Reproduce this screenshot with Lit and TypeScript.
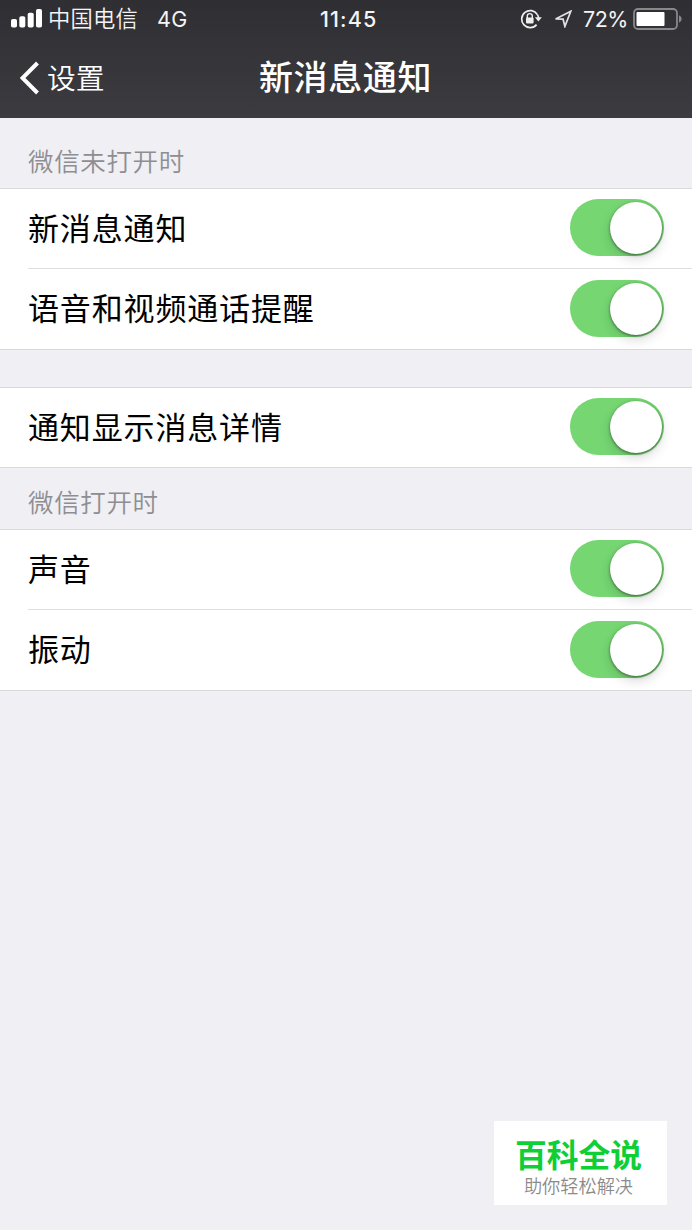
import { LitElement, html, css, nothing } from "lit";
import { customElement, property } from "lit/decorators.js";

@customElement("toggle-switch")
class ToggleSwitch extends LitElement {
  static styles = css`
    :host {
      display: flex;
      flex: none;
      padding-bottom: 1.4px;
    }
    .track {
      box-sizing: border-box;
      display: flex;
      justify-content: flex-end;
      width: 94px;
      height: 57px;
      padding: 3px 2.5px 2px;
      border-radius: 29px;
      background: #75d672;
    }
    .knob {
      width: 52px;
      height: 52px;
      border-radius: 50%;
      background: #fff;
      box-shadow: 0 1px 3px rgba(0, 0, 0, 0.48), 0 5px 12px rgba(0, 0, 0, 0.14);
    }
  `;
  render() {
    return html`<div class="track"><div class="knob"></div></div>`;
  }
}

@customElement("status-bar")
class StatusBar extends LitElement {
  static styles = css`
    :host {
      display: grid;
      grid-template-columns: 320px 1fr auto;
      align-items: center;
      height: 38px;
      padding: 0 9px 0 11px;
      font-size: 22px;
      line-height: 38px;
      color: #f4f4f5;
    }
    .left,
    .right {
      display: flex;
      align-items: center;
    }
    svg {
      display: block;
      flex: none;
    }
    .carrier {
      margin-left: 6px;
      font-size: 22.3px;
      line-height: 34px;
      padding-bottom: 4px;
      letter-spacing: 0.2px;
      font-weight: 350;
    }
    .network {
      margin-left: 19px;
      letter-spacing: 0.3px;
    }
    .latin {
      font-family: Inter, "Liberation Sans", sans-serif;
      font-size: 21.5px;
    }
    .time {
      margin-left: -11px;
      font-weight: 500;
      letter-spacing: 1.1px;
    }
    .lock {
      margin-right: 12px;
    }
    .arrow {
      margin-right: 11px;
    }
    .percent {
      letter-spacing: -0.5px;
    }
    .battery {
      margin-left: 5px;
    }
  `;
  render() {
    return html`
      <div class="left">
        <svg width="31" height="20" viewBox="0 0 31 20" fill="#fff">
          <rect x="0" y="10" width="6" height="8.5" rx="1.8" />
          <rect x="8.3" y="7.2" width="6" height="11.3" rx="1.8" />
          <rect x="16.7" y="3.8" width="6" height="14.7" rx="1.8" />
          <rect x="25" y="0" width="6" height="18.5" rx="1.8" />
        </svg>
        <span class="carrier">中国电信</span>
        <span class="latin network">4G</span>
      </div>
      <span class="latin time">11:45</span>
      <div class="right">
        <svg class="lock" width="22" height="20" viewBox="0 0 22 20" fill="none">
          <path d="M17.4 5.6A8.5 8.5 0 1 0 16.6 15.6" stroke="#eee" stroke-width="1.7" />
          <path d="M17.4 5.6Q18.5 7.3 18.6 9" stroke="#eee" stroke-width="1.7" />
          <path d="M14.9 8.2h7l-3.5 4.2z" fill="#eee" />
          <path d="M7.3 9V7.1a2.5 2.5 0 0 1 5 0V9" stroke="#eee" stroke-width="1.4" />
          <rect x="6" y="8.6" width="7.6" height="5.8" rx="0.8" fill="#eee" />
        </svg>
        <svg class="arrow" width="18" height="18" viewBox="0 0 18 18" fill="none">
          <path
            d="M16.8 1.2 1.6 9l7.5.2 1.8 7.2z"
            stroke="#e2e2e2"
            stroke-width="1.7"
            stroke-linejoin="miter"
          />
        </svg>
        <span class="latin percent">72%</span>
        <svg class="battery" width="50" height="22" viewBox="0 0 50 22" fill="none">
          <rect x="1" y="1" width="43" height="20" rx="4" stroke="#88888b" stroke-width="1.8" />
          <rect x="3.5" y="4" width="28" height="14" rx="1" fill="#fff" />
          <path d="M46 7.3q2.7 1.3 2.7 3.7t-2.7 3.7z" fill="#88888b" />
        </svg>
      </div>
    `;
  }
}

@customElement("setting-row")
class SettingRow extends LitElement {
  @property() label = "";
  static styles = css`
    :host {
      display: flex;
      align-items: center;
      justify-content: space-between;
      margin-left: 28px;
      padding-right: 28px;
      height: 80px;
      font-size: 31px;
      letter-spacing: 0.85px;
      color: #000;
    }
    :host(.divided) {
      border-top: 1px solid #dedee0;
    }
    .label {
      line-height: 46px;
      padding-bottom: 4px;
    }
  `;
  render() {
    return html`<span class="label">${this.label}</span><toggle-switch></toggle-switch>`;
  }
}

@customElement("app-root")
class AppRoot extends LitElement {
  static styles = css`
    :host {
      position: relative;
      display: block;
      height: 1230px;
      overflow: hidden;
      background: #efeff4;
      font-family: "Noto Sans CJK SC", sans-serif;
    }
    .top {
      height: 118px;
      background: linear-gradient(#2f2e33, #3c3b40);
    }
    .nav {
      display: grid;
      grid-template-columns: 1fr auto 1fr;
      align-items: center;
      height: 80px;
      color: #fff;
    }
    .back {
      display: flex;
      align-items: center;
      gap: 7px;
      padding-left: 20px;
      font-size: 28.8px;
      font-weight: 350;
    }
    .back span {
      line-height: 42px;
      padding-bottom: 3px;
    }
    .back svg {
      display: block;
    }
    .title {
      font-size: 34px;
      font-weight: 500;
      letter-spacing: 0.6px;
      line-height: 50px;
      padding: 0 1px 4px 0;
    }
    .caption {
      box-sizing: border-box;
      height: 70px;
      padding: 24px 28px 0;
      font-size: 25.5px;
      font-weight: 350;
      line-height: 36px;
      letter-spacing: 0.65px;
      color: #8e8e92;
    }
    .caption.tight {
      height: 61px;
      padding-top: 15px;
    }
    .group {
      border-top: 1px solid #d9d9dc;
      border-bottom: 1px solid #d9d9dc;
      background: #fff;
    }
    .single {
      margin-top: 37px;
    }
    .single setting-row,
    .group setting-row:first-child {
      height: 79px;
    }
    .brand {
      position: absolute;
      left: 494px;
      top: 1121px;
      width: 173px;
      height: 84px;
      box-sizing: border-box;
      padding: 11px 4px 0 0;
      background: #fff;
      text-align: center;
    }
    .name {
      font-size: 31.8px;
      font-weight: 700;
      line-height: 42px;
      color: #10ce36;
    }
    .slogan {
      font-size: 18.2px;
      font-weight: 350;
      line-height: 22px;
      color: #8b8b8b;
    }
  `;

  group(rows: string[], extra = "") {
    return html`<div class="group ${extra}">
      ${rows.map(
        (r, i) => html`<setting-row class=${i ? "divided" : nothing} label=${r}></setting-row>`
      )}
    </div>`;
  }

  render() {
    return html`
      <header class="top">
        <status-bar></status-bar>
        <div class="nav">
          <div class="back">
            <svg width="20" height="34" viewBox="0 0 20 34" fill="none">
              <path d="M17.5 2 2.5 17l15 15" stroke="#fff" stroke-width="4" />
            </svg>
            <span>设置</span>
          </div>
          <div class="title">新消息通知</div>
          <div></div>
        </div>
      </header>
      <div class="caption">微信未打开时</div>
      ${this.group(["新消息通知", "语音和视频通话提醒"])}
      ${this.group(["通知显示消息详情"], "single")}
      <div class="caption tight">微信打开时</div>
      ${this.group(["声音", "振动"])}
      <div class="brand">
        <div class="name">百科全说</div>
        <div class="slogan">助你轻松解决</div>
      </div>
    `;
  }
}
